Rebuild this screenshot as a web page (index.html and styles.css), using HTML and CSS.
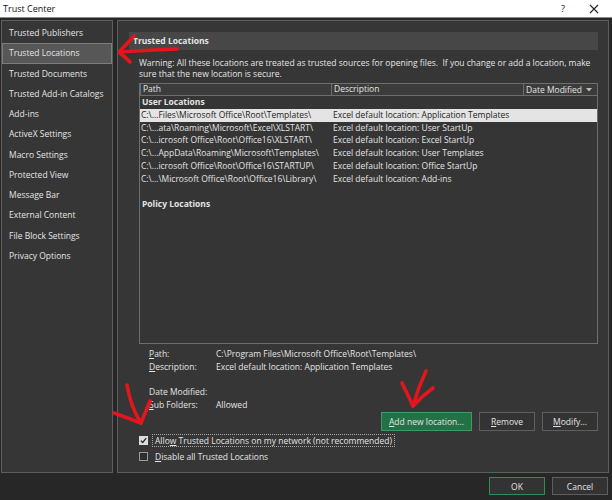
FILE: index.html
```html
<!DOCTYPE html>
<html lang="en">
<head>
  <meta charset="UTF-8">
  <meta name="viewport" content="width=device-width, initial-scale=1.0">
  <title>Trust Center</title>
  <link rel="stylesheet" href="styles.css">
</head>
<body>

<div class="titlebar">
  <span class="title">Trust Center</span>
  <span class="help">?</span>
  <span class="close">
    <svg width="10" height="10" viewBox="0 0 10 10"><path d="M1 1L9 9M9 1L1 9" stroke="#222" stroke-width="1.1" fill="none"/></svg>
  </span>
</div>

<div class="dialog">
  <!-- categories -->
  <ul class="nav">
    <li>Trusted Publishers</li>
    <li class="active">Trusted Locations</li>
    <li>Trusted Documents</li>
    <li>Trusted Add-in Catalogs</li>
    <li>Add-ins</li>
    <li>ActiveX Settings</li>
    <li>Macro Settings</li>
    <li>Protected View</li>
    <li>Message Bar</li>
    <li>External Content</li>
    <li>File Block Settings</li>
    <li>Privacy Options</li>
  </ul>

  <div class="main">
    <div class="section-head">Trusted Locations</div>
    <p class="warning">Warning: All these locations are treated as trusted sources for opening files.&nbsp; If you change or add a location, make<br>sure that the new location is secure.</p>

    <div class="table">
      <div class="thead">
        <div class="th th-path">Path</div>
        <div class="th th-desc">Description</div>
        <div class="th th-date">Date Modified
          <svg class="sort" width="6" height="4" viewBox="0 0 6 4"><path d="M0 0H6L3 3.5Z" fill="#bdbdbd"/></svg>
        </div>
      </div>
      <div class="tbody">
        <div class="group">User Locations</div>
        <div class="row selected"><span class="c-path">C:\...Files\Microsoft Office\Root\Templates\</span><span class="c-desc">Excel default location: Application Templates</span></div>
        <div class="row"><span class="c-path">C:\...ata\Roaming\Microsoft\Excel\XLSTART\</span><span class="c-desc">Excel default location: User StartUp</span></div>
        <div class="row"><span class="c-path">C:\...icrosoft Office\Root\Office16\XLSTART\</span><span class="c-desc">Excel default location: Excel StartUp</span></div>
        <div class="row"><span class="c-path">C:\...AppData\Roaming\Microsoft\Templates\</span><span class="c-desc">Excel default location: User Templates</span></div>
        <div class="row"><span class="c-path">C:\...icrosoft Office\Root\Office16\STARTUP\</span><span class="c-desc">Excel default location: Office StartUp</span></div>
        <div class="row"><span class="c-path">C:\...\Microsoft Office\Root\Office16\Library\</span><span class="c-desc">Excel default location: Add-ins</span></div>
        <div class="row"></div>
        <div class="group">Policy Locations</div>
      </div>
    </div>

    <div class="details">
      <span><u>P</u>ath:</span><span>C:\Program Files\Microsoft Office\Root\Templates\</span>
      <span><u>D</u>escription:</span><span>Excel default location: Application Templates</span>
      <span class="gap"></span><span class="gap"></span>
      <span>Date Modified:</span><span></span>
      <span><u>S</u>ub Folders:</span><span>Allowed</span>
    </div>

    <div class="buttons">
      <button class="btn btn-add"><u>A</u>dd new location...</button>
      <button class="btn"><u>R</u>emove</button>
      <button class="btn"><u>M</u>odify...</button>
    </div>

    <div class="check">
      <span class="box checked">
        <svg width="7" height="7" viewBox="0 0 7 7"><path d="M0.8 3.6L2.7 5.5L6.2 1.2" stroke="#222" stroke-width="1.2" fill="none"/></svg>
      </span>
      <span class="label focus">Allo<u>w</u> Trusted Locations on my network (not recommended)</span>
    </div>
    <div class="check">
      <span class="box"></span>
      <span class="label"><u>D</u>isable all Trusted Locations</span>
    </div>
  </div>
</div>

<div class="footer">
  <button class="btn btn-ok">OK</button>
  <button class="btn">Cancel</button>
</div>

<!-- red annotation arrows drawn over the screenshot -->
<svg class="marks" width="612" height="500" viewBox="0 0 612 500">
  <g stroke="#e3161d" stroke-width="3.6" stroke-linecap="round" stroke-linejoin="round" fill="none">
    <path d="M177 49Q150 50 120 52"/>
    <path d="M134 36Q126 45 119 52Q125 57 130 62"/>
    <path d="M426 371Q418 388 413 406"/>
    <path d="M402 383Q408 395 413 406Q422 396 433 388"/>
    <path d="M127 385Q131 408 141 423"/>
    <path d="M114 413Q128 418 141 423L150 401"/>
  </g>
</svg>

</body>
</html>
```

FILE: styles.css
```css
* {
  box-sizing: border-box;
}
body {
  margin: 0;
  width: 612px;
  height: 500px;
  overflow: hidden;
  position: relative;
  background-color: #272727;
  font-family: "Open Sans", "Noto Sans", sans-serif;
  font-size: 8.5px;
  color: #e4e4e4;
}
u {
  text-decoration-thickness: 1px;
  text-underline-offset: 1px;
}
.titlebar {
  height: 18px;
  background: white;
  color: #111;
  border-bottom: 1px solid #8a8a8a;
  display: flex;
  align-items: center;
  padding-left: 3px;
  font-size: 9px;
}
.titlebar .title {
  flex: 1;
}
.help, .close {
  width: 16px;
  display: flex;
  justify-content: center;
  align-items: center;
}
.close {
  margin-left: 15px;
  margin-right: 10px;
}
.dialog {
  display: flex;
  gap: 4px;
  padding: 2px 3px 0 1px;
  height: 455px;
}
.nav {
  width: 112px;
  margin: 0;
  padding: 2px 0 0;
  list-style: none;
  background: #363636;
  border: 1px solid #5e5e5e;
}
.nav li {
  height: 20.25px;
  line-height: 20.25px;
  padding-left: 7px;
  white-space: nowrap;
}
.nav li.active {
  background: #575757;
  border: 1px solid #7d7d7d;
  line-height: 18.25px;
  padding-left: 6px;
}
.main {
  flex: 1;
  background: #363636;
  border: 1px solid #5e5e5e;
  padding: 11px 10px 0 11px;
  display: flex;
  flex-direction: column;
}
.section-head {
  height: 18px;
  line-height: 18px;
  background: #474747;
  font-weight: bold;
  padding-left: 4px;
}
.warning {
  margin: 7px 0 0 10px;
  line-height: 11px;
  white-space: nowrap;
}
.table {
  margin: 4px 0 0 10px;
  height: 261px;
  border: 1px solid #6e6e6e;
  background: #353535;
}
.thead {
  display: flex;
  height: 12px;
}
.th {
  border: 1px solid #6e6e6e;
  border-top: none;
  background: #3c3c3c;
  line-height: 10px;
  padding-left: 2px;
  white-space: nowrap;
}
.th-path, .th-desc {
  width: 192px;
}
.th-desc {
  border-left: none;
}
.th-date {
  flex: 1;
  border-left: none;
  border-right: none;
  display: flex;
  align-items: center;
  gap: 4px;
}
.group, .row {
  height: 12.8px;
  line-height: 12.8px;
  white-space: nowrap;
}
.group {
  font-weight: bold;
  padding-left: 2px;
}
.row {
  display: flex;
}
.row.selected {
  background: #e4e4e4;
  color: #1c1c1c;
}
.c-path {
  width: 192px;
  padding-left: 1px;
}
.c-desc {
  padding-left: 1px;
}
.details {
  display: grid;
  grid-template-columns: 67px 1fr;
  margin: 2.5px 0 0 20px;
  line-height: 13px;
}
.details .gap {
  height: 12px;
}
.buttons {
  display: flex;
  justify-content: flex-end;
  gap: 7px;
  margin-top: 1.5px;
}
.btn {
  height: 19px;
  width: 56px;
  padding: 0;
  background: #333;
  border: 1px solid #5f5f5f;
  color: #e4e4e4;
  font-family: inherit;
  font-size: inherit;
}
.btn-add {
  width: 91px;
  background: #217346;
  border-color: #3d9c66;
}
.check {
  display: flex;
  align-items: center;
  height: 13px;
  margin: 3px 0 0 10px;
  gap: 4px;
}
.box {
  width: 9px;
  height: 9px;
  border: 1px solid #9a9a9a;
  background: #2e2e2e;
  display: flex;
  align-items: center;
  justify-content: center;
}
.box.checked {
  background: #dcdcdc;
  border-color: #dcdcdc;
}
.label {
  line-height: 11px;
  padding: 0 2px;
  border: 1px dotted transparent;
  white-space: nowrap;
}
.label.focus {
  border-color: #a8a8a8;
}
.footer {
  display: flex;
  justify-content: flex-end;
  gap: 7px;
  padding: 4px 4px 0 0;
}
.footer .btn {
  height: 18px;
  width: 56px;
}
.btn-ok {
  width: 55px;
  border-color: #2f8e57;
}
.marks {
  position: absolute;
  left: 0;
  top: 0;
  pointer-events: none;
}
```
